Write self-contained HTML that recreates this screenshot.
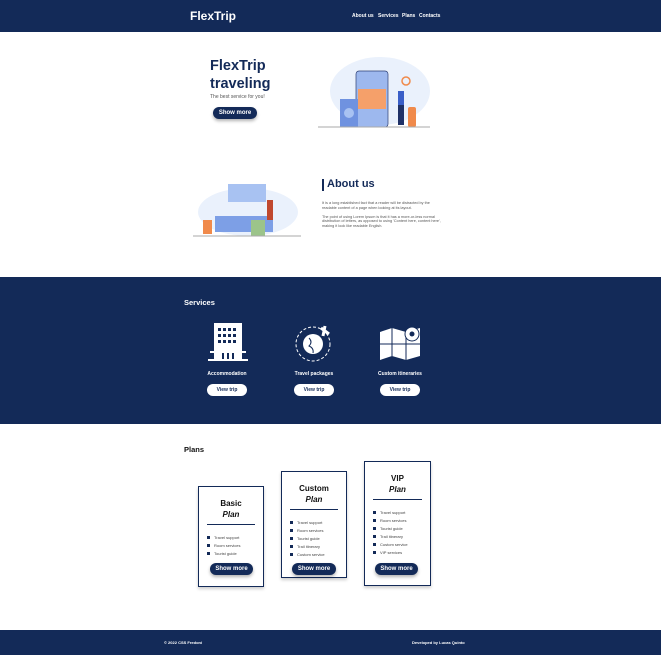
<!DOCTYPE html><html><head><style>
*{margin:0;padding:0;box-sizing:border-box}
body{width:661px;height:655px;font-family:"Liberation Sans",sans-serif;background:#fff;position:relative;overflow:hidden;color:#132a58}
.a{position:absolute}
.nav{background:#132a58;height:32px;left:0;top:0;width:661px}
.btn{position:absolute;background:#132a58;color:#fff;font-size:6px;font-weight:bold;border-radius:8px;text-align:center;line-height:12px;height:12px;box-shadow:0 2px 3px rgba(0,0,0,.3)}
.wbtn{position:absolute;background:#fff;color:#132a58;font-size:5px;font-weight:bold;border-radius:7px;text-align:center;line-height:12px;height:12px;width:40px}
.card{position:absolute;border:1.5px solid #132a58;background:#fff;box-shadow:0 2px 3px rgba(0,0,0,.2);text-align:center}
.card h4{font-size:8px;color:#111;margin-top:11px;line-height:11px}
.card h4 i{display:block}
.card hr{border:0;border-top:1px solid #132a58;margin:4px 8px 9px}
.card ul{list-style:none;text-align:left;padding-left:8px}
.card li{font-size:4px;color:#444;line-height:8px}
.card li:before{content:"";display:inline-block;width:3px;height:3px;background:#132a58;margin-right:4px;vertical-align:middle}
.sv{position:absolute;color:#fff;font-size:5px;font-weight:bold;text-align:center;width:80px}
.nl{position:absolute;top:13px;color:#fff;font-weight:bold;font-size:5px}
</style></head><body>
<div class="a nav"></div>
<div class="a" style="left:190px;top:9px;color:#fff;font-weight:bold;font-size:12px">FlexTrip</div>
<div class="nl" style="left:352px">About us</div>
<div class="nl" style="left:378px">Services</div>
<div class="nl" style="left:402px">Plans</div>
<div class="nl" style="left:419px">Contacts</div>

<div class="a" style="left:210px;top:57px;font-size:14.5px;font-weight:bold;line-height:18px">FlexTrip<br>traveling</div>
<div class="a" style="left:210px;top:94px;font-size:5px;color:#555">The best service for you!</div>
<div class="btn" style="left:213px;top:107px;width:44px">Show more</div>
<svg class="a" style="left:318px;top:53px" width="115" height="76">
<ellipse cx="62" cy="38" rx="50" ry="34" fill="#eaf1fc"/>
<rect x="38" y="18" width="32" height="56" rx="3" fill="#9db8ee" stroke="#2d3f73" stroke-width=".7"/>
<rect x="40" y="36" width="28" height="20" fill="#f5a06a"/>
<rect x="22" y="46" width="18" height="28" fill="#6f92e0"/>
<circle cx="31" cy="60" r="5" fill="#a8c2f2"/>
<circle cx="88" cy="28" r="4" fill="none" stroke="#f08a4b" stroke-width="1.5"/>
<rect x="90" y="54" width="8" height="20" rx="2" fill="#f08a4b"/>
<rect x="80" y="38" width="6" height="14" fill="#3a5fc8"/>
<rect x="80" y="52" width="6" height="20" fill="#1f3167"/>
<line x1="0" y1="74" x2="112" y2="74" stroke="#aaa"/>
</svg>

<svg class="a" style="left:193px;top:178px" width="110" height="60">
<ellipse cx="55" cy="34" rx="50" ry="24" fill="#eaf1fc"/>
<rect x="35" y="6" width="38" height="18" fill="#a8c2f2"/>
<rect x="22" y="38" width="58" height="16" fill="#7d9fe6"/>
<rect x="10" y="42" width="9" height="14" fill="#f08a4b"/>
<rect x="58" y="42" width="14" height="16" fill="#9cc48a"/>
<rect x="74" y="22" width="6" height="20" fill="#c0482e"/>
<line x1="0" y1="58" x2="108" y2="58" stroke="#aaa"/>
</svg>
<div class="a" style="left:322px;top:179px;width:2px;height:12px;background:#132a58"></div>
<div class="a" style="left:327px;top:178px;font-size:11px;font-weight:bold">About us</div>
<div class="a" style="left:322px;top:201px;width:120px;font-size:3.8px;color:#555;line-height:4.5px">It is a long established fact that a reader will be distracted by the readable content of a page when looking at its layout.<br><br style="line-height:2px">The point of using Lorem Ipsum is that it has a more-or-less normal distribution of letters, as opposed to using 'Content here, content here', making it look like readable English.</div>

<div class="a" style="left:0;top:277px;width:661px;height:147px;background:#132a58"></div>
<div class="a" style="left:184px;top:298px;color:#fff;font-weight:bold;font-size:7.5px">Services</div>
<svg class="a" style="left:208px;top:323px" width="40" height="40"><rect x="6" y="0" width="28" height="28" fill="#fff"/><g fill="#132a58"><rect x="10" y="5" width="3" height="3"/><rect x="15" y="5" width="3" height="3"/><rect x="20" y="5" width="3" height="3"/><rect x="25" y="5" width="3" height="3"/><rect x="10" y="11" width="3" height="3"/><rect x="15" y="11" width="3" height="3"/><rect x="20" y="11" width="3" height="3"/><rect x="25" y="11" width="3" height="3"/><rect x="10" y="17" width="3" height="3"/><rect x="15" y="17" width="3" height="3"/><rect x="20" y="17" width="3" height="3"/><rect x="25" y="17" width="3" height="3"/></g><rect x="2" y="28" width="36" height="2" fill="#fff"/><rect x="6" y="30" width="28" height="6" fill="#fff"/><g fill="#132a58"><rect x="14" y="30" width="2" height="6"/><rect x="19" y="30" width="2" height="6"/><rect x="24" y="30" width="2" height="6"/></g><rect x="0" y="36" width="40" height="2" fill="#fff"/></svg>
<svg class="a" style="left:295px;top:323px" width="40" height="40"><circle cx="18" cy="21" r="17" fill="none" stroke="#fff" stroke-dasharray="3 2"/><circle cx="18" cy="21" r="10" fill="#fff"/><path d="M14 15q4 4 0 8q5 2 4 7" stroke="#132a58" fill="none"/><path d="M26 5l8 6M30 3l-2 10" stroke="#fff" stroke-width="3"/></svg>
<svg class="a" style="left:380px;top:326px" width="42" height="36"><path d="M0 6l12-4 14 4 14-4v28l-14 4-14-4-12 4z" fill="#fff"/><path d="M12 2v28M26 6v28" stroke="#132a58"/><path d="M0 18l40 0" stroke="#132a58"/><circle cx="32" cy="8" r="7" fill="#fff" stroke="#132a58"/><circle cx="32" cy="8" r="2.5" fill="#132a58"/></svg>
<div class="sv" style="left:187px;top:371px">Accommodation</div>
<div class="sv" style="left:274px;top:371px">Travel packages</div>
<div class="sv" style="left:360px;top:371px">Custom itineraries</div>
<div class="wbtn" style="left:207px;top:384px">View trip</div>
<div class="wbtn" style="left:294px;top:384px">View trip</div>
<div class="wbtn" style="left:380px;top:384px">View trip</div>

<div class="a" style="left:184px;top:445px;font-weight:bold;font-size:7.5px;color:#111">Plans</div>
<div class="card" style="left:198px;top:486px;width:66px;height:101px"><h4>Basic<i>Plan</i></h4><hr><ul><li>Travel support</li><li>Room services</li><li>Tourist guide</li></ul></div>
<div class="card" style="left:281px;top:471px;width:66px;height:107px"><h4>Custom<i>Plan</i></h4><hr><ul><li>Travel support</li><li>Room services</li><li>Tourist guide</li><li>Trail itinerary</li><li>Custom service</li></ul></div>
<div class="card" style="left:364px;top:461px;width:67px;height:125px"><h4>VIP<i>Plan</i></h4><hr><ul><li>Travel support</li><li>Room services</li><li>Tourist guide</li><li>Trail itinerary</li><li>Custom service</li><li>VIP services</li></ul></div>
<div class="btn" style="left:210px;top:563px;width:43px">Show more</div>
<div class="btn" style="left:292px;top:563px;width:44px">Show more</div>
<div class="btn" style="left:375px;top:563px;width:43px">Show more</div>

<div class="a" style="left:0;top:630px;width:661px;height:25px;background:#132a58"></div>
<div class="a" style="left:164px;top:640px;color:#fff;font-size:4px;font-weight:bold">© 2022 CSS Fredoni</div>
<div class="a" style="left:412px;top:640px;color:#fff;font-size:4px;font-weight:bold">Developed by Lucas Quinto</div>
</body></html>
